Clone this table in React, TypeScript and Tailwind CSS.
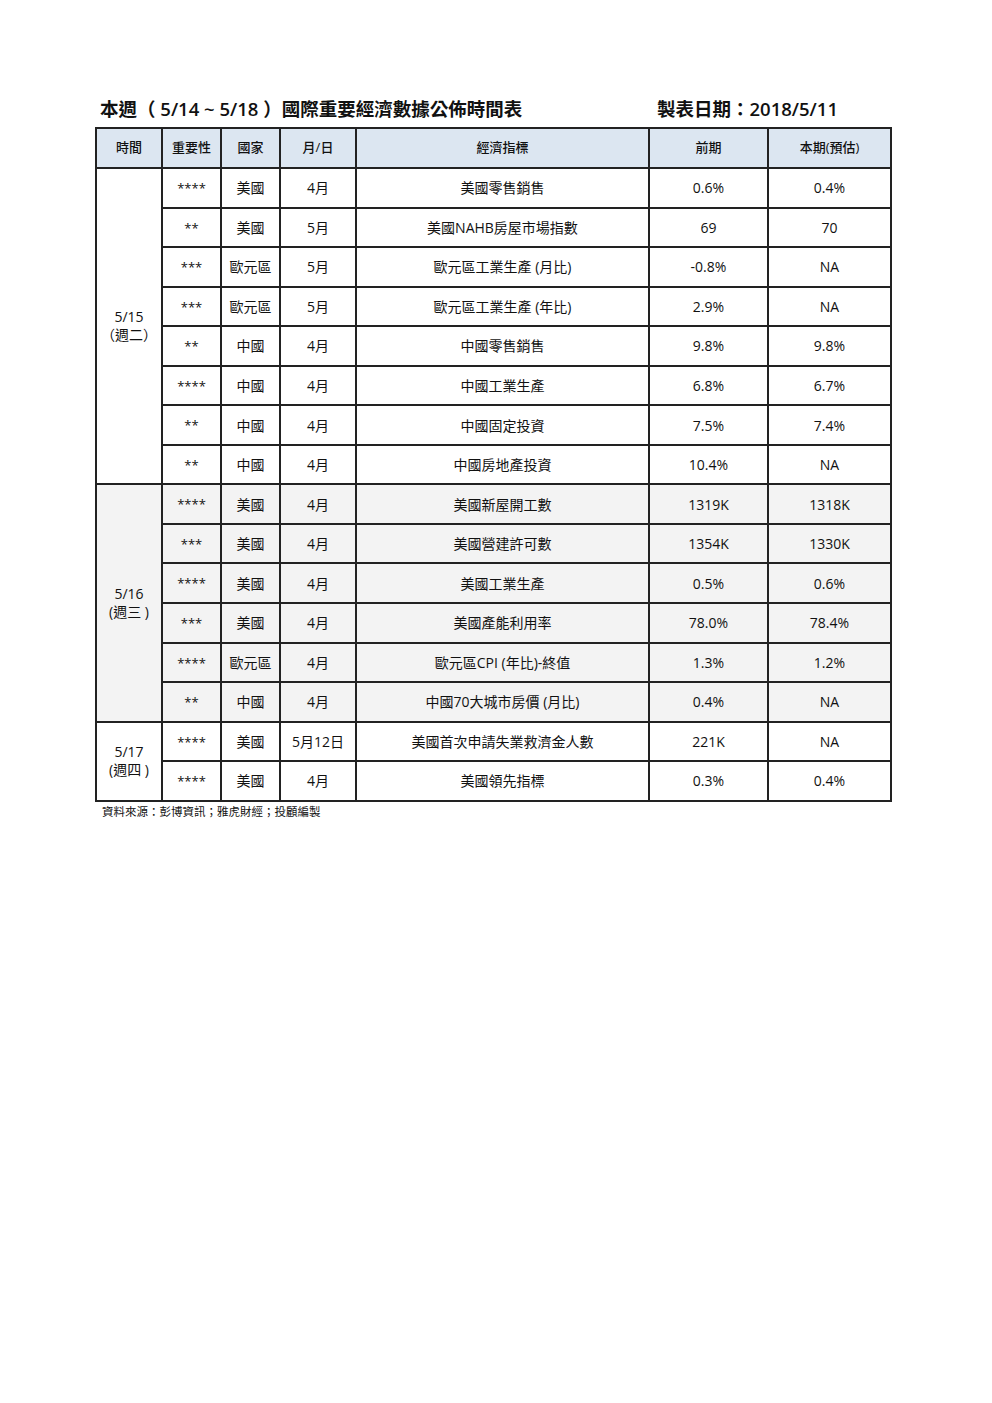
const FONT = { fontFamily: '"Open Sans", "Noto Sans CJK TC", sans-serif' };

type Row = { stars: string; country: string; month: string; name: string; prev: string; est: string };
type Group = { date: string; day: string; gray?: boolean; rows: Row[] };

const GROUPS: Group[] = [
  {
    date: "5/15",
    day: "（週二）",
    rows: [
      { stars: "****", country: "美國", month: "4月", name: "美國零售銷售", prev: "0.6%", est: "0.4%" },
      { stars: "**", country: "美國", month: "5月", name: "美國NAHB房屋市場指數", prev: "69", est: "70" },
      { stars: "***", country: "歐元區", month: "5月", name: "歐元區工業生產 (月比)", prev: "-0.8%", est: "NA" },
      { stars: "***", country: "歐元區", month: "5月", name: "歐元區工業生產 (年比)", prev: "2.9%", est: "NA" },
      { stars: "**", country: "中國", month: "4月", name: "中國零售銷售", prev: "9.8%", est: "9.8%" },
      { stars: "****", country: "中國", month: "4月", name: "中國工業生產", prev: "6.8%", est: "6.7%" },
      { stars: "**", country: "中國", month: "4月", name: "中國固定投資", prev: "7.5%", est: "7.4%" },
      { stars: "**", country: "中國", month: "4月", name: "中國房地產投資", prev: "10.4%", est: "NA" },
    ],
  },
  {
    date: "5/16",
    day: "(週三 )",
    gray: true,
    rows: [
      { stars: "****", country: "美國", month: "4月", name: "美國新屋開工數", prev: "1319K", est: "1318K" },
      { stars: "***", country: "美國", month: "4月", name: "美國營建許可數", prev: "1354K", est: "1330K" },
      { stars: "****", country: "美國", month: "4月", name: "美國工業生產", prev: "0.5%", est: "0.6%" },
      { stars: "***", country: "美國", month: "4月", name: "美國產能利用率", prev: "78.0%", est: "78.4%" },
      { stars: "****", country: "歐元區", month: "4月", name: "歐元區CPI (年比)-終值", prev: "1.3%", est: "1.2%" },
      { stars: "**", country: "中國", month: "4月", name: "中國70大城市房價 (月比)", prev: "0.4%", est: "NA" },
    ],
  },
  {
    date: "5/17",
    day: "(週四 )",
    rows: [
      { stars: "****", country: "美國", month: "5月12日", name: "美國首次申請失業救濟金人數", prev: "221K", est: "NA" },
      { stars: "****", country: "美國", month: "4月", name: "美國領先指標", prev: "0.3%", est: "0.4%" },
    ],
  },
];

const HEAD = ["時間", "重要性", "國家", "月/日", "經濟指標", "前期", "本期(預估)"];
const cell = "border-2 border-[#222] text-center align-middle p-0";

export default function App() {
  return (
    <div className="min-h-[1403px] w-[992px] bg-white text-[#111]" style={FONT}>
      <div className="w-[795px] ml-[95px] pt-[96px]">
        <div className="flex items-end justify-between pl-[5px] pr-[52px] pb-[5px] text-[18.5px] leading-[26px] font-semibold">
          <span>本週（ 5/14 ~ 5/18 ）國際重要經濟數據公佈時間表</span>
          <span>製表日期：2018/5/11</span>
        </div>
        <table className="w-[795px] table-fixed border-collapse border-2 border-[#222] text-[14px]">
          <colgroup>
            <col className="w-[66px]" />
            <col className="w-[59px]" />
            <col className="w-[59px]" />
            <col className="w-[76px]" />
            <col className="w-[293px]" />
            <col className="w-[119px]" />
            <col className="w-[123px]" />
          </colgroup>
          <thead>
            <tr className="h-[40px] bg-[#dce6f1]">
              {HEAD.map((h) => (
                <th key={h} className={`${cell} text-[13px] font-medium`}>{h}</th>
              ))}
            </tr>
          </thead>
          <tbody>
            {GROUPS.map((g) =>
              g.rows.map((r, i) => (
                <tr key={g.date + i} className={`h-[39.56px] ${g.gray ? "bg-[#f3f3f3]" : "bg-white"}`}>
                  {i === 0 && (
                    <td rowSpan={g.rows.length} className={`${cell} leading-[18px] text-[14px]`}>
                      <div>{g.date}</div>
                      <div>{g.day}</div>
                    </td>
                  )}
                  <td className={`${cell} text-[13px] pt-[2px]`}>{r.stars}</td>
                  <td className={cell}>{r.country}</td>
                  <td className={cell}>{r.month}</td>
                  <td className={cell}>{r.name}</td>
                  <td className={cell}>{r.prev}</td>
                  <td className={cell}>{r.est}</td>
                </tr>
              ))
            )}
          </tbody>
        </table>
        <div className="pl-[7px] pt-[2px] text-[11.5px] leading-[16px]">資料來源：彭博資訊；雅虎財經；投顧編製</div>
      </div>
    </div>
  );
}
